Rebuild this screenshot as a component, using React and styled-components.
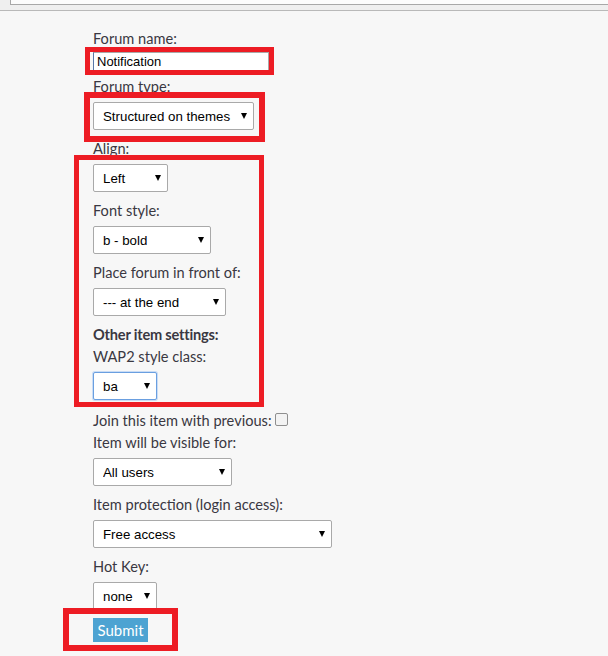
import React from "react";
import styled, { createGlobalStyle } from "styled-components";

const Global = createGlobalStyle`
  html, body { margin: 0; padding: 0; background: #f7f7f7; }
  body { font-family: "Lato", "Liberation Sans", sans-serif; }
`;

const Page = styled.div`
  position: relative;
  width: 608px;
  height: 656px;
  overflow: hidden;
  background: #f7f7f7;
`;

const TopBar = styled.div`
  height: 10px;
  background: #efefef;
  border-bottom: 1px solid #b9b9b9;
  display: flex;
  align-items: flex-start;
`;

const AddressBox = styled.div`
  flex: 1;
  margin-left: 10px;
  height: 4px;
  background: #fcfcfc;
  border-left: 1px solid #a8a8a8;
  border-bottom: 1px solid #a8a8a8;
`;

const Form = styled.form`
  display: flex;
  flex-direction: column;
  align-items: flex-start;
  padding: 17px 0 0 93px;
  margin: 0;
`;

const Label = styled.div`
  font-size: 14.6px;
  line-height: 22px;
  height: 22px;
  color: #3a3842;
  font-weight: ${(p) => (p.$bold ? 700 : 400)};
  letter-spacing: ${(p) => (p.$bold ? "-0.2px" : "0")};
  white-space: nowrap;
`;

const CheckRow = styled.label`
  display: flex;
  align-items: center;
  gap: 3px;
  height: 24px;
  font-size: 14.6px;
  color: #3a3842;
  white-space: nowrap;
`;

const Check = styled.input`
  appearance: none;
  margin: -2px 0 0 0;
  width: 13px;
  height: 13px;
  border: 1px solid #8f8f8f;
  border-radius: 2px;
  background: #f3f3f3;
  box-sizing: border-box;
`;

const TextInput = styled.input`
  box-sizing: border-box;
  width: 176px;
  height: 19px;
  margin: 2px 0 5px;
  padding: 0 3px;
  border: 1px solid #a9a9a9;
  border-left-color: #5877a8;
  background: #fff;
  font-family: "Liberation Sans", Arial, sans-serif;
  font-size: 13px;
  color: #000;
  outline: none;
`;

const SelectWrap = styled.div`
  position: relative;
  width: ${(p) => p.$w}px;
  height: 28px;
  margin: 4px 0 8px;
`;

const SelectBox = styled.select`
  appearance: none;
  box-sizing: border-box;
  width: 100%;
  height: 100%;
  margin: 0;
  padding: 0 0 0 9px;
  border: 1px solid ${(p) => (p.$focus ? "#6a9fe0" : "#a9a9a9")};
  box-shadow: ${(p) => (p.$focus ? "0 0 0 1px #c9dcf5" : "none")};
  border-radius: 2px;
  background: #fff;
  font-family: "Liberation Sans", Arial, sans-serif;
  font-size: 13.3px;
  color: #000;
  outline: none;
`;

const Arrow = styled.span`
  position: absolute;
  right: 7px;
  top: 50%;
  margin-top: -3px;
  width: 0;
  height: 0;
  border-left: 3.5px solid transparent;
  border-right: 3.5px solid transparent;
  border-top: 6px solid #000;
  pointer-events: none;
`;

const SubmitButton = styled.button`
  width: 55px;
  height: 24px;
  padding: 0;
  border: none;
  background: #4da3d2;
  color: #fff;
  font-family: "Lato", "Liberation Sans", sans-serif;
  font-size: 15px;
`;

const RedBox = styled.div`
  position: absolute;
  box-sizing: border-box;
  border: ${(p) => p.$t}px solid #ed1c24;
  pointer-events: none;
`;

function Select({ w, value, focus }) {
  return (
    <SelectWrap $w={w}>
      <SelectBox $focus={focus} defaultValue={value}>
        <option>{value}</option>
      </SelectBox>
      <Arrow />
    </SelectWrap>
  );
}

const boxes = [
  { l: 85, t: 47, w: 189, h: 28, b: 5 },
  { l: 84, t: 92, w: 181, h: 50, b: 6 },
  { l: 74, t: 155, w: 190, h: 252, b: 5 },
  { l: 63, t: 608, w: 115, h: 43, b: 6 },
];

export default function App() {
  return (
    <Page>
      <Global />
      <TopBar>
        <AddressBox />
      </TopBar>
      <Form onSubmit={(e) => e.preventDefault()}>
        <Label>Forum name:</Label>
        <TextInput defaultValue="Notification" />
        <Label>Forum type:</Label>
        <Select w={161} value="Structured on themes" />
        <Label>Align:</Label>
        <Select w={75} value="Left" />
        <Label>Font style:</Label>
        <Select w={118} value="b - bold" />
        <Label>Place forum in front of:</Label>
        <Select w={133} value="--- at the end" />
        <Label $bold>Other item settings:</Label>
        <Label>WAP2 style class:</Label>
        <Select w={64} value="ba" focus />
        <CheckRow>
          Join this item with previous:
          <Check type="checkbox" />
        </CheckRow>
        <Label>Item will be visible for:</Label>
        <Select w={139} value="All users" />
        <Label>Item protection (login access):</Label>
        <Select w={239} value="Free access" />
        <Label>Hot Key:</Label>
        <Select w={64} value="none" />
        <SubmitButton type="submit">Submit</SubmitButton>
      </Form>
      {boxes.map((b, i) => (
        <RedBox
          key={i}
          $t={b.b}
          style={{ left: b.l, top: b.t, width: b.w, height: b.h }}
        />
      ))}
    </Page>
  );
}
